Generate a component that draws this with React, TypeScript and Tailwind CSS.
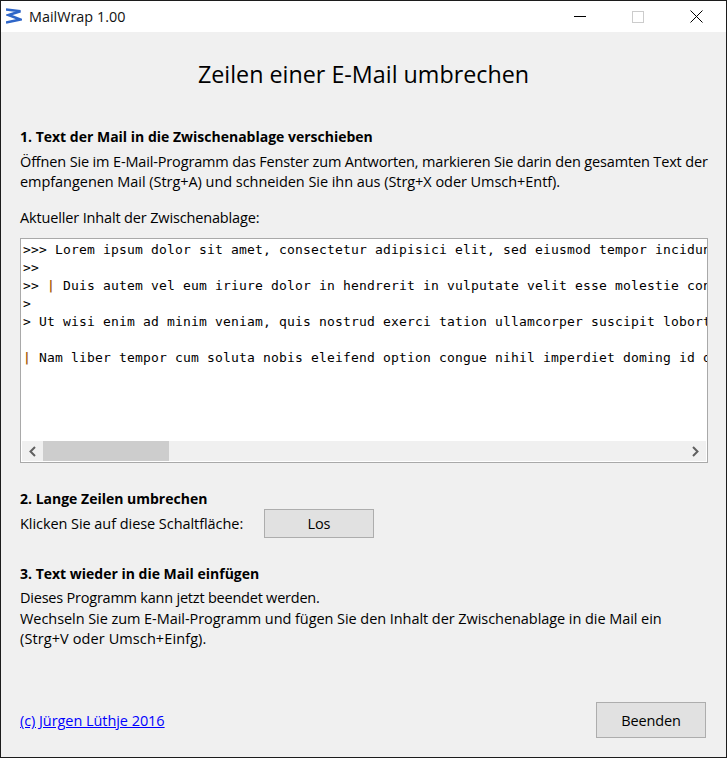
import React from "react";

const ui = "font-['Open_Sans','Noto_Sans',sans-serif]";

function Logo() {
  return (
    <svg width="16" height="18" viewBox="0 0 16 18" className="block">
      <path d="M0 1.5L14.5 3.2 2.5 7 14.5 11.5 0 14.5" fill="none" stroke="#2f66c8" strokeWidth="2.5" />
    </svg>
  );
}

const lines: { pre: string; bar?: boolean; text: string }[] = [
  { pre: ">>> ", text: "Lorem ipsum dolor sit amet, consectetur adipisici elit, sed eiusmod tempor incidunt ut labore et dolore magna aliqua." },
  { pre: ">>", text: "" },
  { pre: ">> ", bar: true, text: " Duis autem vel eum iriure dolor in hendrerit in vulputate velit esse molestie consequat, vel illum dolore eu feugiat." },
  { pre: ">", text: "" },
  { pre: "> ", text: "Ut wisi enim ad minim veniam, quis nostrud exerci tation ullamcorper suscipit lobortis nisl ut aliquip ex ea commodo." },
  { pre: "", text: "" },
  { pre: "", bar: true, text: " Nam liber tempor cum soluta nobis eleifend option congue nihil imperdiet doming id quod mazim placerat facer possim." },
];

export default function App() {
  return (
    <div className={`${ui} w-[727px] h-[758px] flex flex-col border border-[#1c1c1c] bg-[#f0f0f0] text-[14.5px] tracking-[-0.15px] text-black overflow-hidden`}>
      <div className="h-[31px] shrink-0 bg-white flex items-center">
        <div className="ml-[5px] mr-[7px]"><Logo /></div>
        <span className="text-[14.4px] tracking-normal text-[#111]">MailWrap 1.00</span>
        <div className="ml-auto flex items-center mr-[1px]">
          <div className="w-[58px] h-[31px] flex items-center justify-center">
            <div className="w-[12px] h-[1px] bg-black" />
          </div>
          <div className="w-[58px] h-[31px] flex items-center justify-center">
            <div className="w-[12px] h-[12px] border border-[#cccccc]" />
          </div>
          <div className="w-[58px] h-[31px] flex items-center justify-center">
            <svg width="13" height="13" viewBox="0 0 13 13"><path d="M.5.5l12 12M12.5.5l-12 12" stroke="#000" strokeWidth="1" /></svg>
          </div>
        </div>
      </div>

      <div className="flex-1 flex flex-col px-[19px]">
        <h1 className="text-center text-[23.3px] leading-[30px] mt-[27px] font-normal tracking-normal">Zeilen einer E-Mail umbrechen</h1>

        <h2 className="font-bold text-[14px] tracking-normal leading-[20px] mt-[38px]">1. Text der Mail in die Zwischenablage verschieben</h2>
        <p className="leading-[20px] mt-[5px] whitespace-nowrap">Öffnen Sie im E-Mail-Programm das Fenster zum Antworten, markieren Sie darin den gesamten Text der</p>
        <p className="leading-[20px] whitespace-nowrap tracking-[-0.05px]">empfangenen Mail (Strg+A) und schneiden Sie ihn aus (Strg+X oder Umsch+Entf).</p>
        <p className="leading-[20px] mt-[16px]">Aktueller Inhalt der Zwischenablage:</p>

        <div className="mt-[10px] w-[688px] h-[225px] border border-[#a9a9a9] bg-white flex flex-col">
          <div className="flex-1 pt-[2px] pl-[2px] overflow-hidden font-['DejaVu_Sans_Mono',monospace] text-[13px] leading-[18px] tracking-[0.174px] whitespace-pre text-black">
            {lines.map((l, i) => (
              <div key={i} className="h-[18px]">
                {l.pre}
                {l.bar && <span className="text-[#a8620c] font-bold">|</span>}
                {l.text}
              </div>
            ))}
          </div>
          <div className="h-[20px] mx-[1px] mb-[1px] bg-[#f0f0f0] flex items-center">
            <div className="w-[21px] flex justify-center">
              <svg width="9" height="11" viewBox="0 0 9 11"><path d="M7 1L2.5 5.5 7 10" fill="none" stroke="#606060" strokeWidth="2" /></svg>
            </div>
            <div className="w-[126px] h-full bg-[#cdcdcd]" />
            <div className="ml-auto w-[21px] flex justify-center">
              <svg width="9" height="11" viewBox="0 0 9 11"><path d="M2 1l4.5 4.5L2 10" fill="none" stroke="#606060" strokeWidth="2" /></svg>
            </div>
          </div>
        </div>

        <h2 className="font-bold text-[14px] tracking-normal leading-[20px] mt-[26px]">2. Lange Zeilen umbrechen</h2>
        <div className="flex items-center">
          <span className="w-[244px] leading-[20px] tracking-[-0.06px]">Klicken Sie auf diese Schaltfläche:</span>
          <button className="w-[110px] h-[29px] border border-[#adadad] bg-[#e1e1e1]">Los</button>
        </div>

        <h2 className="font-bold text-[14px] tracking-normal leading-[20px] mt-[26px]">3. Text wieder in die Mail einfügen</h2>
        <p className="leading-[20px] mt-[4px] tracking-[-0.22px]">Dieses Programm kann jetzt beendet werden.</p>
        <p className="leading-[20px] mt-[1px] whitespace-nowrap tracking-[-0.06px]">Wechseln Sie zum E-Mail-Programm und fügen Sie den Inhalt der Zwischenablage in die Mail ein</p>
        <p className="leading-[20px] tracking-[0.1px]">(Strg+V oder Umsch+Einfg).</p>

        <div className="mt-auto mb-[19px] flex items-center justify-between">
          <a href="#" className="text-[#0000ff] underline leading-[20px] mt-[2px] tracking-[-0.06px]">(c) Jürgen Lüthje 2016</a>
          <button className="w-[110px] h-[36px] mr-[1px] pt-[1px] border border-[#adadad] bg-[#e1e1e1]">Beenden</button>
        </div>
      </div>
    </div>
  );
}
